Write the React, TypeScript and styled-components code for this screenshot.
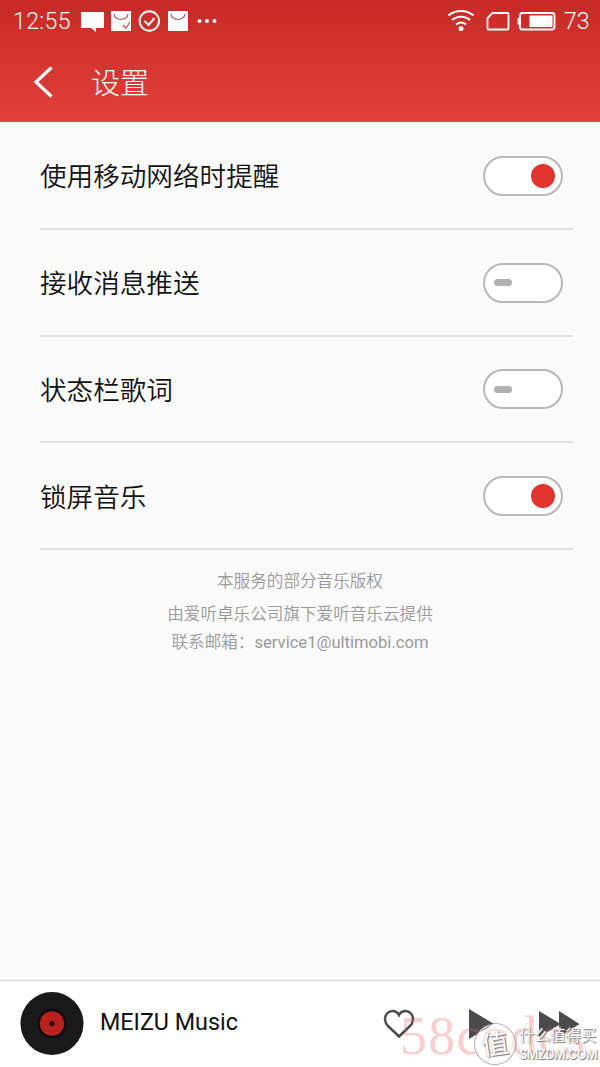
import React from 'react';
import styled, { createGlobalStyle } from 'styled-components';

const GlobalStyle = createGlobalStyle`
  * { box-sizing: border-box; }
  body { margin: 0; background: #fafafa; }
`;

const Screen = styled.div`
  position: relative;
  width: 600px;
  height: 1067px;
  display: flex;
  flex-direction: column;
  overflow: hidden;
  background: #fafafa;
  color: #111;
  font-family: Roboto, 'Noto Sans CJK SC', sans-serif;
`;

const Header = styled.header`
  height: 122px;
  flex: none;
  background: linear-gradient(#c72a26, #e2403a);
  color: #fff;
`;

const StatusBar = styled.div`
  height: 42px;
  padding: 0 11px 0 13px;
  display: flex;
  align-items: center;
  justify-content: space-between;
  font-size: 23px;
  line-height: 40px;
  font-weight: 350;
`;

const StatusGroup = styled.div`
  display: flex;
  align-items: center;
  svg { display: block; }
`;

const Clock = styled.span`
  width: 68px;
  padding-top: 2px;
  letter-spacing: 0.4px;
`;

const Battery = styled.span`
  width: 26px;
  padding: 2px 0 0 1px;
  white-space: nowrap;
`;

const TitleBar = styled.div`
  height: 80px;
  display: flex;
  align-items: center;
  padding-left: 33px;
`;

const Title = styled.h1`
  margin: 0 0 0 37px;
  padding-top: 3px;
  font-size: 29px;
  line-height: 40px;
  font-weight: 300;
`;

const List = styled.ul`
  list-style: none;
  margin: 0 27px 0 40px;
  padding: 1px 0 0;
`;

const Row = styled.li`
  height: 106.75px;
  padding: 1px 10px 0 0;
  display: flex;
  align-items: center;
  justify-content: space-between;
  border-bottom: 2px solid #dedede;
`;

const Label = styled.span`
  padding-top: 3px;
  font-size: 26.6px;
  line-height: 40px;
  font-weight: 350;
`;

const Toggle = styled.button<{ $on: boolean }>`
  width: 80px;
  height: 40px;
  padding: 0 ${p => (p.$on ? 6 : 9)}px;
  display: flex;
  align-items: center;
  justify-content: ${p => (p.$on ? 'flex-end' : 'flex-start')};
  border: 2px solid #b8b8b8;
  border-radius: 20px;
  background: #fff;
`;

const Knob = styled.span<{ $on: boolean }>`
  width: ${p => (p.$on ? 24 : 18)}px;
  height: ${p => (p.$on ? 24 : 7)}px;
  border-radius: 12px;
  background: ${p => (p.$on ? '#e0342e' : '#b0b0b0')};
`;

const Notice = styled.div`
  flex: 1;
  padding-top: 18px;
  text-align: center;
  font-size: 16.6px;
  line-height: 28px;
  font-weight: 350;
  color: #999;
  p { margin: 0; }
  p:first-child { margin-bottom: 5px; }
`;

const Email = styled.span`
  font-weight: 400;
`;

const Player = styled.footer`
  height: 87px;
  flex: none;
  display: flex;
  align-items: center;
  padding: 0 20px;
  border-top: 1px solid #d4d4d4;
  background: #fff;
  svg { display: block; flex: none; }
`;

const Track = styled.span`
  flex: 1;
  margin-left: 16px;
  padding-bottom: 5px;
  font-size: 23.3px;
  line-height: 30px;
`;

const Controls = styled.div`
  display: flex;
  align-items: center;
  gap: 45px;
  padding-bottom: 1px;
  svg:first-child { margin-right: 9px; }
`;

const CodeMark = styled.span`
  position: absolute;
  left: 400px;
  top: 1004px;
  font: 54px/64px 'Liberation Serif', serif;
  letter-spacing: 1.3px;
  color: rgba(245, 90, 90, 0.3);
  white-space: nowrap;
`;

const SiteMark = styled.div`
  position: absolute;
  left: 475px;
  top: 1023px;
  display: flex;
  align-items: center;
  gap: 4px;
  color: #fff;
  text-shadow: 1px 1px 1px #777, 0 0 1px #999;
`;

const Seal = styled.span`
  width: 40px;
  height: 40px;
  border: 1.5px solid #fff;
  border-radius: 50%;
  outline: 1px solid rgba(130, 130, 130, 0.6);
  background: rgba(255, 255, 255, 0.35);
  font: 400 27px/36px 'Noto Sans CJK SC', sans-serif;
  text-align: center;
  transform: rotate(-8deg);
`;

const SiteText = styled.div`
  display: flex;
  flex-direction: column;
  white-space: nowrap;
`;

const SiteName = styled.span`
  font: 400 15.5px/22px 'Noto Sans CJK SC', sans-serif;
`;

const SiteUrl = styled.span`
  font: 600 12.5px/19px Inter, sans-serif;
  letter-spacing: -0.45px;
`;

const settings = [
  { label: '使用移动网络时提醒', on: true },
  { label: '接收消息推送', on: false },
  { label: '状态栏歌词', on: false },
  { label: '锁屏音乐', on: true },
];

const Notifications = () => (
  <svg width="136" height="24" viewBox="0 0 136 24" fill="none">
    <path d="M0 3h23v16h-8v4l-5-4H0z" fill="#fff" />
    <path d="M30 2h20v20H30z" fill="#fff" />
    <path d="M33 5c1 7 13 7 14 0M42 16l3 3 4-6" stroke="#b84a46" strokeWidth="1.2" />
    <circle cx="68.3" cy="12" r="9.7" stroke="#fff" strokeWidth="2" />
    <path d="m63.5 12 4 4 6-7" stroke="#fff" strokeWidth="2" />
    <path d="M87 2h20v20H87z" fill="#fff" />
    <path d="M90 5c1 7 13 7 14 0" stroke="#b84a46" strokeWidth="1.2" />
    <g fill="#fff"><circle cx="118.5" cy="12" r="2" /><circle cx="126" cy="12" r="2" /><circle cx="133.500" cy="12" r="2" /></g>
  </svg>
);

const Signals = () => (
  <svg width="115" height="24" viewBox="0 0 115 24" fill="none" stroke="#fff" strokeWidth="1.8">
    <path d="M.5 6.500c7-6 18-6 25 0M4 11c5-4.500 13-4.500 18 0M8 15.500c3-2.500 7-2.500 10 0" strokeWidth="2" />
    <circle cx="13" cy="19.500" r="2.500" fill="#fff" stroke="none" />
    <path d="M44.500 4h15q1 0 1 1v14.500q0 1-1 1h-19q-1 0-1-1V9z" />
    <rect x="72" y="4" width="34.500" height="16.500" rx="2.500" />
    <path d="M70.500 9v6.500" />
    <path d="M81.500 6.500h23v11.500h-23z" fill="#fff" stroke="none" />
  </svg>
);

export default function App() {
  return (
    <Screen>
      <GlobalStyle />
      <Header>
        <StatusBar>
          <StatusGroup><Clock>12:55</Clock><Notifications /></StatusGroup>
          <StatusGroup><Signals /><Battery>73</Battery></StatusGroup>
        </StatusBar>
        <TitleBar>
          <svg width="21" height="32" viewBox="0 0 21 32" fill="none" stroke="#fff" strokeWidth="3.2">
            <path d="M18.500 1.500 3 16l15.500 14.500" />
          </svg>
          <Title>设置</Title>
        </TitleBar>
      </Header>
      <List>
        {settings.map(({ label, on }) => (
          <Row key={label}>
            <Label>{label}</Label>
            <Toggle $on={on} aria-pressed={on} aria-label={label}><Knob $on={on} /></Toggle>
          </Row>
        ))}
      </List>
      <Notice>
        <p>本服务的部分音乐版权</p>
        <p>由爱听卓乐公司旗下爱听音乐云提供</p>
        <p>联系邮箱：<Email>service1@ultimobi.com</Email></p>
      </Notice>
      <Player>
        <svg width="64" height="64" viewBox="0 0 64 64">
          <circle cx="32" cy="31.500" r="31.500" fill="#191919" />
          <circle cx="32" cy="31.500" r="14.500" fill="#0c0c0c" />
          <circle cx="32" cy="31.500" r="12.200" fill="#b9211f" />
          <circle cx="32" cy="31.500" r="2.600" fill="#260c0c" />
        </svg>
        <Track>MEIZU Music</Track>
        <Controls>
          <svg width="32" height="30" viewBox="0 0 32 30" fill="none" stroke="#4b4b4b" strokeWidth="2.500">
            <path d="M16 27.500 5 17C1.500 13.500 1 8 4 4.500 7.500.7 13.500 1 16 6c2.500-5 8.500-5.300 12-1.500 3 3.500 2.500 9-1 12.500z" />
          </svg>
          <svg width="25" height="30" viewBox="0 0 25 30" fill="#4b4b4b"><path d="M0 0v30l25-15z" /></svg>
          <svg width="41" height="26" viewBox="0 0 41 26" fill="#4b4b4b"><path d="M0 0v26l20-12v12l20.500-13L20 0v12z" /></svg>
        </Controls>
      </Player>
      <CodeMark>58codes</CodeMark>
      <SiteMark>
        <Seal>值</Seal>
        <SiteText>
          <SiteName>什么值得买</SiteName>
          <SiteUrl>SMZDM.COM</SiteUrl>
        </SiteText>
      </SiteMark>
    </Screen>
  );
}
